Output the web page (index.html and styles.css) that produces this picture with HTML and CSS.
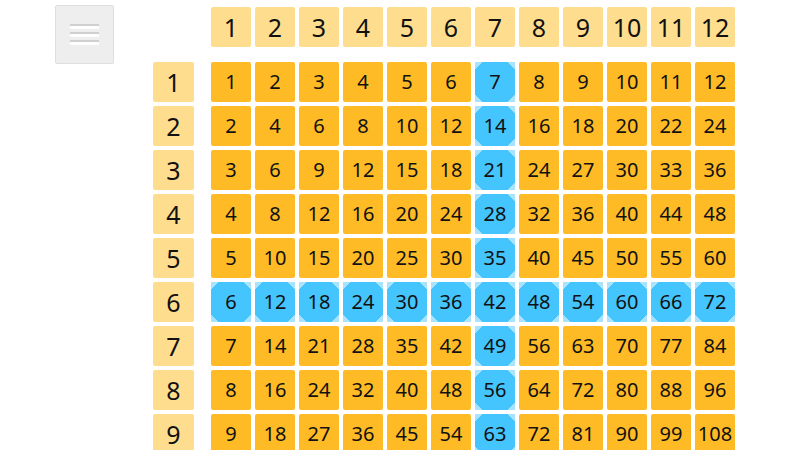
FILE: index.html
```html
<!DOCTYPE html>
<html>
<head>
<meta charset="utf-8">
<link rel="stylesheet" href="styles.css">
</head>
<body>
<div class="page">
  <button class="menu" aria-label="menu"><span class="bar"></span><span class="bar"></span><span class="bar"></span></button>
  <div class="table">
    <div class="corner"></div>
    <div class="hd">1</div><div class="hd">2</div><div class="hd">3</div><div class="hd">4</div><div class="hd">5</div><div class="hd">6</div><div class="hd">7</div><div class="hd">8</div><div class="hd">9</div><div class="hd">10</div><div class="hd">11</div><div class="hd">12</div>

    <div class="lb">1</div>
    <div class="c">1</div><div class="c">2</div><div class="c">3</div><div class="c">4</div><div class="c">5</div><div class="c">6</div><div class="c b">7</div><div class="c">8</div><div class="c">9</div><div class="c">10</div><div class="c">11</div><div class="c">12</div>

    <div class="lb">2</div>
    <div class="c">2</div><div class="c">4</div><div class="c">6</div><div class="c">8</div><div class="c">10</div><div class="c">12</div><div class="c b">14</div><div class="c">16</div><div class="c">18</div><div class="c">20</div><div class="c">22</div><div class="c">24</div>

    <div class="lb">3</div>
    <div class="c">3</div><div class="c">6</div><div class="c">9</div><div class="c">12</div><div class="c">15</div><div class="c">18</div><div class="c b">21</div><div class="c">24</div><div class="c">27</div><div class="c">30</div><div class="c">33</div><div class="c">36</div>

    <div class="lb">4</div>
    <div class="c">4</div><div class="c">8</div><div class="c">12</div><div class="c">16</div><div class="c">20</div><div class="c">24</div><div class="c b">28</div><div class="c">32</div><div class="c">36</div><div class="c">40</div><div class="c">44</div><div class="c">48</div>

    <div class="lb">5</div>
    <div class="c">5</div><div class="c">10</div><div class="c">15</div><div class="c">20</div><div class="c">25</div><div class="c">30</div><div class="c b">35</div><div class="c">40</div><div class="c">45</div><div class="c">50</div><div class="c">55</div><div class="c">60</div>

    <div class="lb">6</div>
    <div class="c b">6</div><div class="c b">12</div><div class="c b">18</div><div class="c b">24</div><div class="c b">30</div><div class="c b">36</div><div class="c b">42</div><div class="c b">48</div><div class="c b">54</div><div class="c b">60</div><div class="c b">66</div><div class="c b">72</div>

    <div class="lb">7</div>
    <div class="c">7</div><div class="c">14</div><div class="c">21</div><div class="c">28</div><div class="c">35</div><div class="c">42</div><div class="c b">49</div><div class="c">56</div><div class="c">63</div><div class="c">70</div><div class="c">77</div><div class="c">84</div>

    <div class="lb">8</div>
    <div class="c">8</div><div class="c">16</div><div class="c">24</div><div class="c">32</div><div class="c">40</div><div class="c">48</div><div class="c b">56</div><div class="c">64</div><div class="c">72</div><div class="c">80</div><div class="c">88</div><div class="c">96</div>

    <div class="lb">9</div>
    <div class="c">9</div><div class="c">18</div><div class="c">27</div><div class="c">36</div><div class="c">45</div><div class="c">54</div><div class="c b">63</div><div class="c">72</div><div class="c">81</div><div class="c">90</div><div class="c">99</div><div class="c">108</div>
  </div>
</div>
</body>
</html>
```

FILE: styles.css
```css
html, body {
  margin: 0;
  padding: 0;
  background: #ffffff;
  overflow: hidden;
}

.page {
  display: flex;
  align-items: flex-start;
  padding: 5px 0 0 55px;
  font-family: "Noto Sans", "DejaVu Sans", sans-serif;
  color: #111111;
}

.menu {
  box-sizing: border-box;
  flex: none;
  width: 59px;
  height: 59px;
  margin: 0 39px 0 0;
  padding: 0;
  background: #eeeeee;
  border: 1px solid #dedede;
  border-radius: 2px;
  display: flex;
  flex-direction: column;
  align-items: center;
  justify-content: center;
  gap: 3px;
}

.bar {
  display: block;
  width: 29px;
  height: 5px;
  box-sizing: border-box;
  border-top: 2px solid #cfcfcf;
  background: #ffffff;
}

.table {
  flex: none;
  display: grid;
  grid-template-columns: 54px repeat(12, 40px);
  grid-template-rows: 51px;
  grid-auto-rows: 40px;
  column-gap: 4px;
  row-gap: 4px;
  margin-top: 2px;
}

.corner, .hd, .lb {
  width: 40px;
  height: 40px;
  align-self: start;
  justify-self: start;
}

.lb {
  width: 41px;
}

.hd, .lb {
  display: flex;
  align-items: center;
  justify-content: center;
  background: #ffdd8e;
  border-radius: 2px;
  font-size: 25px;
  line-height: 1;
}

.c {
  display: flex;
  align-items: center;
  justify-content: center;
  background: #ffbb26;
  border-radius: 2px;
  font-size: 20px;
  line-height: 1;
}

.c.b {
  background-color: #44c5fe;
  background-image:
    linear-gradient(135deg, #a9e3fd 5px, transparent 5px),
    linear-gradient(225deg, #a9e3fd 5px, transparent 5px),
    linear-gradient(315deg, #a9e3fd 5px, transparent 5px),
    linear-gradient(45deg, #a9e3fd 5px, transparent 5px);
  border-radius: 0;
}
```
